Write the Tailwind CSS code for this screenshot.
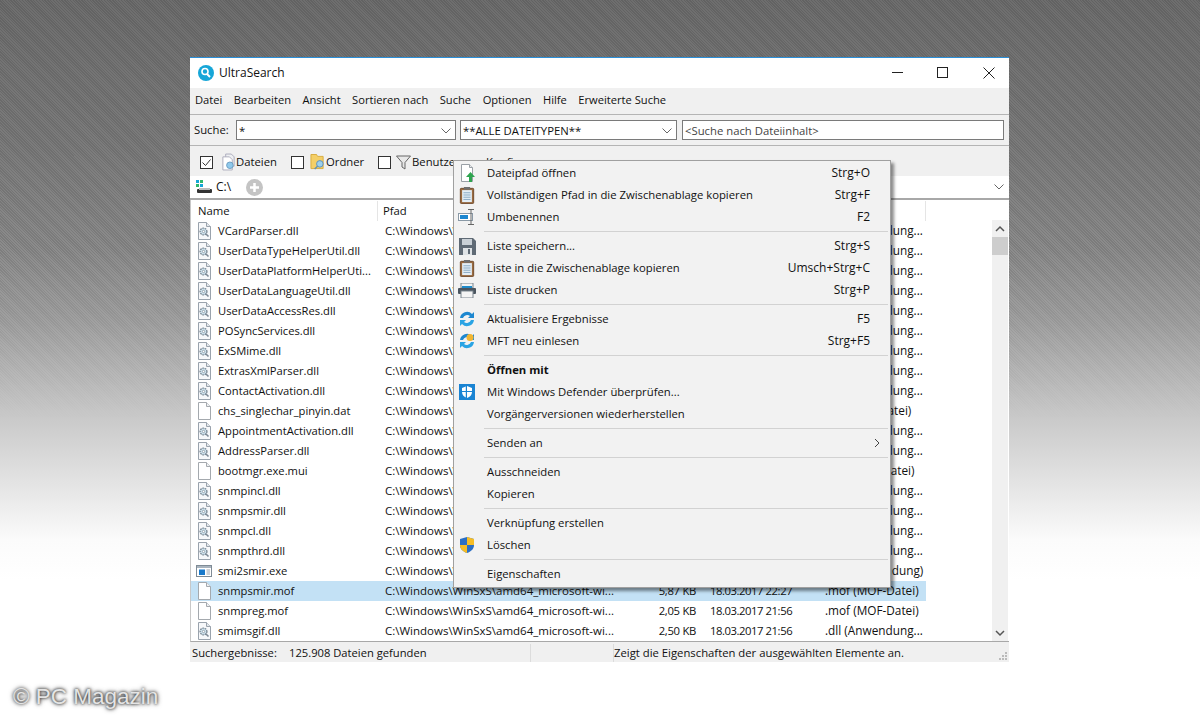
<!DOCTYPE html>
<html lang="de">
<head>
  <meta charset="UTF-8">
  <title>UltraSearch</title>
  <script src="https://cdn.jsdelivr.net/npm/@tailwindcss/browser@4"></script>
</head>
<body class="m-0">
<div class="relative w-[1200px] h-[720px] overflow-hidden font-['Open_Sans',sans-serif] text-[11.3px] text-[#111] bg-[linear-gradient(180deg,#6e6e6e_0px,#7c7c7c_150px,#8c8c8c_250px,#a0a0a0_320px,#c2c2c2_400px,#e2e2e2_480px,#fbfbfb_540px,#ffffff_580px)]">
  <div class="absolute inset-x-0 top-0 h-[420px] bg-[repeating-linear-gradient(45deg,rgba(0,0,0,0.1)_0px,rgba(0,0,0,0.1)_1px,transparent_1px,transparent_2px)] [mask-image:linear-gradient(180deg,black_60%,transparent_100%)]"></div>

  <svg class="hidden">
    <symbol id="dll" viewBox="0 0 16 18">
      <path d="M2.5 .5h8l4 4v13h-12z" fill="#f7f8fa" stroke="#9aa3ad"/>
      <path d="M10.5 .5v4h4" fill="#e4e8ec" stroke="#9aa3ad"/>
      <circle cx="7.5" cy="9.5" r="3.4" fill="#cfe3ee" stroke="#7d8a96" stroke-width="1.4" stroke-dasharray="1.6 .8"/>
      <circle cx="7.5" cy="9.5" r="1.2" fill="#fff" stroke="#7d8a96" stroke-width=".7"/>
      <path d="M9.5 11.5l3 3" stroke="#7d8a96" stroke-width="1.6"/>
    </symbol>
    <symbol id="file" viewBox="0 0 16 18">
      <path d="M2.5 .5h8l4 4v13h-12z" fill="#fff" stroke="#a4a9ae"/>
      <path d="M10.5 .5v4h4" fill="#eef0f2" stroke="#a4a9ae"/>
    </symbol>
    <symbol id="exe" viewBox="0 0 16 18">
      <rect x=".5" y="3.5" width="15" height="11" fill="#fff" stroke="#7f8b96"/>
      <rect x="1" y="4" width="14" height="2" fill="#a9b4be"/>
      <rect x="3" y="7.5" width="6" height="5.5" fill="#1979ca"/>
      <path d="M10.5 8h3.5M10.5 10h3.5M10.5 12h3.5" stroke="#9aa3ad"/>
    </symbol>
    <symbol id="clip" viewBox="0 0 18 20">
      <rect x="1.5" y="2.5" width="15" height="17" rx="1" fill="#9b6b3f" stroke="#6b4526"/>
      <rect x="3.5" y="4.5" width="11" height="13.5" fill="#e3eef6"/>
      <path d="M5 7.5h8M5 10h8M5 12.500h8M5 15h8" stroke="#7fa3bd"/>
      <rect x="5.500" y="1" width="7" height="3" fill="#6f6f6f"/>
    </symbol>
    <symbol id="sync" viewBox="1 1 16 16">
      <path d="M2 8a7 7 0 0 1 12-4l2-2v6h-6l2-2a4.500 4.500 0 0 0-7 2z" fill="#1e88d0"/>
      <path d="M16 10a7 7 0 0 1-12 4l-2 2v-6h6l-2 2a4.500 4.500 0 0 0 7-2z" fill="#2aa4e4"/>
    </symbol>
  </svg>

  <!-- hauptfenster -->
  <div class="absolute left-[190px] top-[57px] w-[819px] h-[605px] flex flex-col border-t border-[#2b8fd8] bg-[#f0f0f0]">
    <div class="h-[30px] bg-white flex items-center shrink-0">
      <svg class="ml-[8px] w-[16px] h-[16px]" viewBox="0 0 16 16">
        <circle cx="8" cy="8" r="8" fill="#16a6d8"/>
        <circle cx="7" cy="6.500" r="3" fill="none" stroke="#fff" stroke-width="1.600"/>
        <path d="M9 9l3 3" stroke="#fff" stroke-width="2"/>
      </svg>
      <span class="ml-[5px] text-[12px]">UltraSearch</span>
      <div class="ml-auto flex items-center">
        <svg class="w-[46px] h-[30px]" viewBox="0 0 46 30"><path d="M20 14.500h11" stroke="#222"/></svg>
        <svg class="w-[46px] h-[30px]" viewBox="0 0 46 30"><rect x="19.500" y="9.500" width="10" height="10" fill="none" stroke="#222"/></svg>
        <svg class="w-[46px] h-[30px] mr-[-1px]" viewBox="0 0 46 30"><path d="M19.500 9.500l11 11M30.500 9.500l-11 11" stroke="#222"/></svg>
      </div>
    </div>

    <div class="h-[25px] pb-[1px] flex items-center gap-[11.5px] pl-[5px] text-[11.15px] border-b border-[#b4b4b4] shrink-0 box-content">
      <span>Datei</span><span>Bearbeiten</span><span>Ansicht</span><span>Sortieren nach</span><span>Suche</span><span>Optionen</span><span>Hilfe</span><span>Erweiterte Suche</span>
    </div>

    <div class="h-[31px] flex items-center pl-[4px] border-b border-[#b4b4b4] shrink-0">
      <span class="w-[42px]">Suche:</span>
      <div class="w-[220px] h-[20px] bg-white border border-[#7a7a7a] flex items-center pl-[2px] pt-[2px]">*<svg class="ml-auto mr-[3px] w-[12px] h-[8px]" viewBox="0 0 12 8"><path d="M1.500 1.500l4.500 4.500 4.500-4.500" fill="none" stroke="#666"/></svg></div>
      <div class="ml-[4px] w-[217px] h-[20px] bg-white border border-[#7a7a7a] flex items-center pl-[2px] pt-[2px]">**ALLE DATEITYPEN**<svg class="ml-auto mr-[3px] w-[12px] h-[8px]" viewBox="0 0 12 8"><path d="M1.500 1.500l4.500 4.500 4.500-4.500" fill="none" stroke="#666"/></svg></div>
      <div class="ml-[5px] w-[322px] h-[20px] bg-white border border-[#7a7a7a] flex items-center pl-[2px] pt-[2px] text-[#444]">&lt;Suche nach Dateiinhalt&gt;</div>
    </div>

    <div class="h-[30px] flex items-center pl-[10px] pt-[2px] shrink-0">
      <span class="w-[13px] h-[13px] border border-[#333] bg-white flex items-center justify-center"><svg class="w-[11px] h-[11px]" viewBox="0 0 11 11"><path d="M1.500 5.500l3 3 5-6" fill="none" stroke="#333"/></svg></span>
      <svg class="ml-[8px] w-[15px] h-[18px]" viewBox="0 0 16 18"><path d="M5 .5h6l3 3v10H5z" fill="#eef0f2" stroke="#aab"/><path d="M2 3.500h7l3 3v11H2z" fill="#fff" stroke="#aab"/><circle cx="9.500" cy="12.500" r="3.500" fill="#8fc9ec" stroke="#6b9cc0"/></svg>
      <span class="w-[55px]">Dateien</span>
      <span class="w-[13px] h-[13px] border border-[#333] bg-white"></span>
      <svg class="ml-[6px] w-[15px] h-[18px]" viewBox="0 0 16 18"><path d="M1 1h6l1 2h6v13H1z" fill="#f4cf67" stroke="#d8ab3c"/><circle cx="10.500" cy="11" r="3.500" fill="#9bd0ee" stroke="#5f8fb5"/><path d="M8 13.500l-3 3" stroke="#5f8fb5" stroke-width="1.500"/></svg>
      <span class="ml-[1px] w-[52px]">Ordner</span>
      <span class="w-[13px] h-[13px] border border-[#333] bg-white"></span>
      <svg class="ml-[5px] w-[15px] h-[15px]" viewBox="0 0 15 15"><path d="M.5 1h14L9 7.500V14l-3-2V7.500z" fill="#e8e8e8" stroke="#666"/></svg>
      <span class="ml-[1px] w-[41px] overflow-hidden whitespace-nowrap">Benutzerfilter</span>
      <span class="ml-[33px]">Konfig</span>
    </div>

    <div class="h-[22px] bg-white flex items-center shrink-0 border-b-2 border-[#a8a8a8] box-content">
      <svg class="ml-[6px] w-[16px] h-[14px]" viewBox="0 0 16 14"><rect x="0" y="0" width="3" height="3" fill="#16a6d8"/><rect x="4" y="0" width="3" height="3" fill="#2fb86b"/><rect x="0" y="4" width="3" height="3" fill="#2fb86b"/><rect x="4" y="4" width="3" height="3" fill="#16a6d8"/><rect x="1" y="9" width="15" height="4" rx="1" fill="#333"/><rect x="3" y="8" width="11" height="2" fill="#bbb"/></svg>
      <span class="ml-[4px] text-[12px]">C:\</span>
      <svg class="ml-[15px] w-[17px] h-[17px]" viewBox="0 0 17 17"><circle cx="8.500" cy="8.500" r="8.500" fill="#c4c4c4"/><path d="M8.500 4v9M4 8.500h9" stroke="#fff" stroke-width="2.500"/></svg>
      <svg class="ml-auto mr-[4px] w-[12px] h-[8px]" viewBox="0 0 12 8"><path d="M1.500 1.500l4.500 4.500 4.500-4.500" fill="none" stroke="#666"/></svg>
    </div>

    <div class="flex-1 min-h-0 bg-white flex border-b border-[#a8a8a8] border-l border-l-[#c8c8c8]">
      <div class="w-[801px] shrink-0">
        <div class="h-[21px] w-[735px] pt-[1px] grid grid-cols-[187px_249px_76px_117px_106px] items-center">
          <span class="pl-[7px] border-r border-[#e5e5e5] h-full flex items-center">Name</span>
          <span class="pl-[5px] border-r border-[#e5e5e5] h-full flex items-center">Pfad</span>
          <span class="border-r border-[#e5e5e5] h-full"></span>
          <span class="border-r border-[#e5e5e5] h-full"></span>
          <span class="border-r border-[#e5e5e5] h-full"></span>
        </div>
        <div id="zeilen"></div>
      </div>
      <div class="w-[16px] ml-auto mr-[1px] mt-[20px] bg-[#f0f0f0] flex flex-col items-center">
        <svg class="w-[16px] h-[17px] shrink-0" viewBox="0 0 16 17"><path d="M4 11l4-4 4 4" fill="none" stroke="#555" stroke-width="1.500"/></svg>
        <div class="w-full h-[18px] bg-[#cdcdcd]"></div>
        <svg class="w-[16px] h-[17px] mt-auto shrink-0" viewBox="0 0 16 17"><path d="M4 7l4 4 4-4" fill="none" stroke="#555" stroke-width="1.500"/></svg>
      </div>
    </div>

    <div class="h-[20px] flex items-center shrink-0 bg-[#f0f0f0] pt-[2px] text-[11.2px]">
      <span class="w-[99px] pl-[2px]">Suchergebnisse:</span>
      <span class="w-[241px]">125.908 Dateien gefunden</span>
      <span class="w-[83px] h-full border-l border-[#dcdcdc]"></span>
      <span class="h-full border-l border-[#dcdcdc] flex items-center text-[11.3px]">Zeigt die Eigenschaften der ausgewählten Elemente an.</span>
      <svg class="ml-auto mr-[1px] mt-[6px] w-[11px] h-[11px]" viewBox="0 0 11 11"><path d="M8 1h2v2H8zM5 4h2v2H5zM8 4h2v2H8zM2 7h2v2H2zM5 7h2v2H5zM8 7h2v2H8z" fill="#bbb"/></svg>
    </div>

    <!-- kontextmenue -->
    <div class="absolute left-[263px] top-[102px] w-[438px] h-[428px] bg-[#f2f2f2] border border-[#a0a0a0] py-[1px] shadow-[3px_3px_3px_rgba(0,0,0,0.45)]" id="menue"></div>
  </div>

  <div class="absolute left-[13px] top-[684px] font-['Liberation_Sans',sans-serif] text-[22.5px] leading-[26px] text-[#e4e4e4] [text-shadow:0_0_3px_#222,0_0_5px_#444]">© PC Magazin</div>
</div>

<script>
  const dll = ".dll (Anwendung...";
  const pfad = "C:\\Windows\\WinSxS\\amd64_microsoft-wi...";
  const zeilen = [
    ["VCardParser.dll", "dll", dll], ["UserDataTypeHelperUtil.dll", "dll", dll],
    ["UserDataPlatformHelperUti...", "dll", dll], ["UserDataLanguageUtil.dll", "dll", dll],
    ["UserDataAccessRes.dll", "dll", dll], ["POSyncServices.dll", "dll", dll],
    ["ExSMime.dll", "dll", dll], ["ExtrasXmlParser.dll", "dll", dll],
    ["ContactActivation.dll", "dll", dll], ["chs_singlechar_pinyin.dat", "file", ".dat (DAT-Datei)"],
    ["AppointmentActivation.dll", "dll", dll], ["AddressParser.dll", "dll", dll],
    ["bootmgr.exe.mui", "file", ".mui (MUI-Datei)"], ["snmpincl.dll", "dll", dll],
    ["snmpsmir.dll", "dll", dll], ["snmpcl.dll", "dll", dll], ["snmpthrd.dll", "dll", dll],
    ["smi2smir.exe", "exe", ".exe (Anwendung)"],
    ["snmpsmir.mof", "file", ".mof (MOF-Datei)", "5,87 KB", "18.03.2017 22:27", true],
    ["snmpreg.mof", "file", ".mof (MOF-Datei)", "2,05 KB", "18.03.2017 21:56"],
    ["smimsgif.dll", "dll", dll, "2,50 KB", "18.03.2017 21:56"]
  ];

  document.getElementById("zeilen").innerHTML = zeilen.map(z => `
    <div class="h-[20px] w-[735px] grid grid-cols-[187px_249px_76px_117px_106px] items-center whitespace-nowrap ${z[5] ? "bg-[#c3e1f5]" : ""}">
      <span class="flex items-center text-[11.2px]"><svg class="ml-[5px] w-[16px] h-[18px] shrink-0"><use href="#${z[1]}"/></svg><span class="ml-[6px]">${z[0]}</span></span>
      <span class="pl-[7px] text-[11.5px]">${pfad}</span>
      <span class="text-right pr-[7px] tracking-[-0.3px]">${z[3] || ""}</span>
      <span class="pl-[7px] tracking-[-0.45px]">${z[4] || ""}</span>
      <span class="pl-[5px] text-[11.8px]">${z[2]}</span>
    </div>`).join("");

  const icons = {
    oeffnen: `<svg class="w-[18px] h-[20px]" viewBox="0 0 18 20"><path d="M3.500 1.500h8l3 3v14h-11z" fill="#fff" stroke="#9aa0a6"/><path d="M11.500 1.500v3h3" fill="#e8eaec" stroke="#9aa0a6"/><path d="M12.500 9l4.500 5h-3v5h-3v-5h-3z" fill="#2ea44f"/></svg>`,
    clip: `<svg class="w-[16px] h-[18px]"><use href="#clip"/></svg>`,
    umbenennen: `<svg class="w-[18px] h-[16px]" viewBox="0 0 18 16"><rect x=".5" y="4.500" width="14" height="7" fill="#fff" stroke="#8a99a6"/><rect x="2" y="6" width="8" height="4" fill="#1c86d0"/><path d="M10 .5h6M13 .5v15M10 15.500h6" stroke="#666"/></svg>`,
    speichern: `<svg class="w-[17px] h-[17px]" viewBox="0 0 17 17"><path d="M0 0h14l3 3v14H0z" fill="#5f6a75"/><rect x="3" y="1" width="10" height="6" fill="#c9d0d6"/><rect x="4" y="10" width="9" height="7" fill="#dfe3e6"/><rect x="9" y="11" width="2" height="5" fill="#5f6a75"/></svg>`,
    drucken: `<svg class="w-[18px] h-[15px]" viewBox="0 0 18 15"><rect x="3" y="0" width="12" height="5" fill="#f4f4f4" stroke="#7b858e"/><rect x="4" y="3" width="10" height="2" fill="#1d8ac9"/><rect x="0" y="5" width="18" height="6" rx="1" fill="#4a555f"/><rect x="3" y="8" width="12" height="7" fill="#f4f4f4" stroke="#7b858e"/></svg>`,
    sync: `<svg class="w-[16px] h-[16px]"><use href="#sync"/></svg>`,
    mft: `<svg class="w-[16px] h-[16px]" viewBox="0 0 16 16"><use href="#sync" width="16" height="16"/><circle cx="11" cy="4.500" r="3.500" fill="#f2b632"/></svg>`,
    defender: `<svg class="w-[16px] h-[16px]" viewBox="0 0 16 16"><rect width="16" height="16" fill="#1a84d3"/><path d="M8 2l5 2v4c0 3-2 5-5 6-3-1-5-3-5-6V4z" fill="#fff"/><path d="M7.400 2v12M3 7.500h10" stroke="#1a84d3" stroke-width="1.200"/></svg>`,
    uac: `<svg class="w-[14px] h-[16px]" viewBox="0 0 14 16"><path d="M7 0l7 2v6c0 4-3 6.500-7 8-4-1.500-7-4-7-8V2z" fill="#2b6fc4"/><path d="M7 0l7 2v6H7zM7 8v8c-4-1.500-7-4-7-8z" fill="#f6bd25"/></svg>`
  };

  const menue = [
    ["Dateipfad öffnen", "Strg+O", "oeffnen"],
    ["Vollständigen Pfad in die Zwischenablage kopieren", "Strg+F", "clip"],
    ["Umbenennen", "F2", "umbenennen"], 0,
    ["Liste speichern...", "Strg+S", "speichern"],
    ["Liste in die Zwischenablage kopieren", "Umsch+Strg+C", "clip"],
    ["Liste drucken", "Strg+P", "drucken"], 0,
    ["Aktualisiere Ergebnisse", "F5", "sync"],
    ["MFT neu einlesen", "Strg+F5", "mft"], 0,
    ["Öffnen mit", "", "", "fett"],
    ["Mit Windows Defender überprüfen...", "", "defender"],
    ["Vorgängerversionen wiederherstellen", ""], 0,
    ["Senden an", ">"], 0,
    ["Ausschneiden", ""], ["Kopieren", ""], 0,
    ["Verknüpfung erstellen", ""],
    ["Löschen", "", "uac"], 0,
    ["Eigenschaften", ""]
  ];

  document.getElementById("menue").innerHTML = menue.map(m => m === 0
    ? `<div class="h-[7px] ml-[30px] mr-[2px] flex items-center"><div class="w-full h-px bg-[#d2d2d2]"></div></div>`
    : `<div class="h-[22px] flex items-center whitespace-nowrap">
        <span class="w-[33px] h-full flex items-center justify-center shrink-0 pr-[7px]">${icons[m[2]] || ""}</span>
        <span class="${m[3] ? "font-bold" : ""}">${m[0]}</span>
        ${m[1] === ">"
          ? `<svg class="ml-auto mr-[10px] w-[6px] h-[10px]" viewBox="0 0 6 10"><path d="M1 1l4 4-4 4" fill="none" stroke="#444"/></svg>`
          : `<span class="ml-auto mr-[20px] text-[12px]">${m[1]}</span>`}
      </div>`).join("");
</script>
</body>
</html>
